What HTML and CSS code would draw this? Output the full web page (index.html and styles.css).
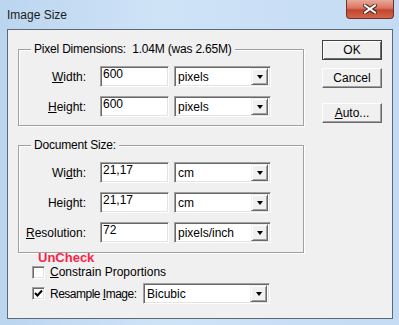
FILE: index.html
```html
<!DOCTYPE html>
<html lang="en">

<head>
	<meta charset="UTF-8">
	<title>Image Size</title>
	<link rel="stylesheet" href="styles.css">
</head>

<body>
	<div class="window">
		<div class="titlebar">
			<span class="title">Image Size</span>
			<div class="close">
				<svg width="14" height="10" viewBox="0 0 14 10">
					<path d="M2 1.5 L12 8.5 M12 1.5 L2 8.5" stroke="#4b2a24" stroke-width="4" stroke-linecap="square" fill="none" />
					<path d="M2 1.5 L12 8.5 M12 1.5 L2 8.5" stroke="#fff" stroke-width="2" stroke-linecap="square" fill="none" />
				</svg>
			</div>
		</div>

		<div class="client">
			<div class="main">
				<fieldset class="group">
					<legend>Pixel Dimensions:&nbsp; 1.04M (was 2.65M)</legend>
					<div class="row">
						<label class="row-label"><u>W</u>idth:</label>
						<input class="field" type="text" value="600">
						<div class="combo">
							<span class="combo-text">pixels</span>
							<span class="combo-btn"></span>
						</div>
					</div>
					<div class="row">
						<label class="row-label"><u>H</u>eight:</label>
						<input class="field" type="text" value="600">
						<div class="combo">
							<span class="combo-text">pixels</span>
							<span class="combo-btn"></span>
						</div>
					</div>
				</fieldset>

				<fieldset class="group group-doc">
					<legend>Document Size:</legend>
					<div class="row">
						<label class="row-label">Wi<u>d</u>th:</label>
						<input class="field" type="text" value="21,17">
						<div class="combo">
							<span class="combo-text">cm</span>
							<span class="combo-btn"></span>
						</div>
					</div>
					<div class="row">
						<label class="row-label">Hei<u>g</u>ht:</label>
						<input class="field" type="text" value="21,17">
						<div class="combo">
							<span class="combo-text">cm</span>
							<span class="combo-btn"></span>
						</div>
					</div>
					<div class="row">
						<label class="row-label"><u>R</u>esolution:</label>
						<input class="field" type="text" value="72">
						<div class="combo">
							<span class="combo-text">pixels/inch</span>
							<span class="combo-btn"></span>
						</div>
					</div>
				</fieldset>

				<div class="note">UnCheck</div>

				<div class="check-row">
					<span class="checkbox"></span>
					<span><u>C</u>onstrain Proportions</span>
				</div>

				<div class="check-row resample">
					<span class="checkbox">
						<svg width="9" height="9" viewBox="0 0 9 9">
							<path d="M1 4 L3.5 6.5 L8 1.5" stroke="#000" stroke-width="2" fill="none" />
						</svg>
					</span>
					<span class="resample-label">Resample <u>I</u>mage:</span>
					<div class="combo combo-wide">
						<span class="combo-text">Bicubic</span>
						<span class="combo-btn"></span>
					</div>
				</div>
			</div>

			<div class="buttons">
				<button class="btn btn-default">OK</button>
				<button class="btn">Cancel</button>
				<button class="btn btn-auto"><u>A</u>uto...</button>
			</div>
		</div>
	</div>
</body>

</html>
```

FILE: styles.css
```css
body {
	margin: 0;
	padding: 0;
	font-family: "Liberation Sans", Arial, sans-serif;
	font-size: 12px;
	color: #000;
}

.window {
	width: 399px;
	height: 325px;
	background: linear-gradient(to right, #bcd5ef, #cfe3f7 40%, #c4dbf3);
	display: flex;
	flex-direction: column;
	box-sizing: border-box;
}

.titlebar {
	height: 29px;
	display: flex;
	align-items: flex-start;
	justify-content: space-between;
	padding-left: 7px;
}

.title {
	margin-top: 8px;
	font-size: 12px;
	line-height: 14px;
	color: #1b1b1b;
}

.close {
	width: 46px;
	height: 18px;
	margin-right: 5px;
	border: 1px solid #6d3327;
	border-top: none;
	border-radius: 0 0 4px 4px;
	background: linear-gradient(#eaa99a, #d9755f 45%, #c4452d 55%, #d0654c);
	display: flex;
	align-items: center;
	justify-content: center;
}

.client {
	flex: 1;
	margin: 0 6px 6px 7px;
	background-color: #f0f0f0;
	border: 1px solid #5c6a78;
	display: flex;
	align-items: flex-start;
}

.main {
	padding: 12px 0 0 10px;
	width: 286px;
}

.group {
	margin: 0;
	padding: 10px 0 8px 0;
	border: 1px solid #a0a0a0;
	box-shadow: inset 1px 1px 0 #fff, 1px 1px 0 #fff;
	display: flex;
	flex-direction: column;
	gap: 9px;
}

.group legend {
	margin-left: 12px;
	padding: 0 3px;
	line-height: 14px;
	background-color: #f0f0f0;
	letter-spacing: -0.2px;
}

.group-doc {
	margin-top: 12px;
	padding-bottom: 9px;
}

.row {
	display: flex;
	align-items: center;
	height: 21px;
}

.row-label {
	width: 67px;
	text-align: right;
	margin-right: 14px;
}

.field {
	width: 69px;
	height: 21px;
	box-sizing: border-box;
	margin: 0 5px 0 0;
	padding: 0 0 5px 2px;
	line-height: 14px;
	border: 1px solid;
	border-color: #a0a0a0 #fff #fff #a0a0a0;
	box-shadow: inset 1px 1px 0 #696969, inset -1px -1px 0 #e3e3e3;
	background-color: #fff;
	font-family: "Liberation Sans", Arial, sans-serif;
	font-size: 12px;
	outline: none;
}

.combo {
	width: 97px;
	height: 21px;
	box-sizing: border-box;
	border: 1px solid;
	border-color: #a0a0a0 #fff #fff #a0a0a0;
	box-shadow: inset 1px 1px 0 #696969, inset -1px -1px 0 #e3e3e3;
	background-color: #fff;
	display: flex;
	align-items: center;
	justify-content: space-between;
	padding: 2px 2px 2px 3px;
}

.combo-wide {
	width: 127px;
}

.combo-btn {
	width: 17px;
	height: 17px;
	box-sizing: border-box;
	background-color: #f0f0f0;
	border: 1px solid;
	border-color: #f0f0f0 #696969 #696969 #f0f0f0;
	box-shadow: inset 1px 1px 0 #fff, inset -1px -1px 0 #a0a0a0;
	display: flex;
	align-items: center;
	justify-content: center;
}

.combo-btn::after {
	content: "";
	border-left: 3.5px solid transparent;
	border-right: 3.5px solid transparent;
	border-top: 4px solid #000;
}

.note {
	margin: -2px 0 0 20px;
	font-size: 13px;
	line-height: 13px;
	font-weight: bold;
	color: #fa2448;
}

.check-row {
	display: flex;
	align-items: center;
	margin: 1px 0 0 14px;
	height: 14px;
	gap: 5px;
}

.resample {
	margin-top: 4px;
	height: 21px;
}

.resample-label {
	width: 86px;
	margin-right: 2px;
	letter-spacing: -0.5px;
	white-space: nowrap;
}

.checkbox {
	width: 13px;
	height: 13px;
	box-sizing: border-box;
	border: 1px solid;
	border-color: #a0a0a0 #fff #fff #a0a0a0;
	box-shadow: inset 1px 1px 0 #696969, inset -1px -1px 0 #e3e3e3;
	background-color: #fff;
	display: flex;
	align-items: center;
	justify-content: center;
}

.buttons {
	display: flex;
	flex-direction: column;
	gap: 8px;
	padding-top: 10px;
	margin-left: 18px;
}

.btn {
	width: 60px;
	height: 20px;
	box-sizing: border-box;
	padding: 0;
	background-color: #f0f0f0;
	border: 1px solid;
	border-color: #fff #696969 #696969 #fff;
	box-shadow: inset -1px -1px 0 #a0a0a0;
	font-family: "Liberation Sans", Arial, sans-serif;
	font-size: 12px;
	color: #000;
}

.btn-default {
	border: 1px solid #404040;
	box-shadow: inset 1px 1px 0 #fff, inset -1px -1px 0 #696969;
}

.btn-auto {
	margin-top: 7px;
}
```
